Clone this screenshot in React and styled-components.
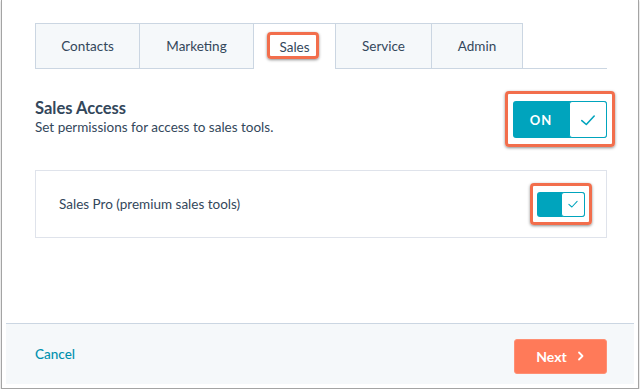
import React from 'react';
import styled, { createGlobalStyle } from 'styled-components';

const GlobalStyle = createGlobalStyle`
  html, body {
    margin: 0;
    padding: 0;
    background: #fff;
  }
  body {
    font-family: Lato, "Noto Sans", sans-serif;
    color: #33475b;
  }
`;

const Frame = styled.div`
  box-sizing: border-box;
  margin-left: 1px;
  width: 638px;
  height: 389px;
  border: 1px solid #a4a4a4;
  border-top: none;
  box-shadow: 0 1px 2px rgba(0, 0, 0, .25);
  padding: 0 4px 4px;
`;

const Modal = styled.div`
  display: flex;
  flex-direction: column;
  height: 100%;
  background: #fff;
`;

const Body = styled.div`
  flex: 1;
  padding: 23px 27px 0 29px;
`;

const TabList = styled.div`
  display: flex;
  align-items: flex-end;
  border-bottom: 1px solid #cbd6e2;
`;

const Tab = styled.div`
  position: relative;
  box-sizing: border-box;
  width: ${p => p.$width}px;
  height: ${p => (p.$active ? '46px' : '45px')};
  margin-bottom: ${p => (p.$active ? '-1px' : '0')};
  margin-left: ${p => (p.$first ? '0' : '-1px')};
  display: flex;
  align-items: center;
  justify-content: center;
  background: ${p => (p.$active ? '#fff' : '#f5f8fa')};
  border: 1px solid #cbd6e2;
  border-bottom: none;
  font-size: 13.5px;
  color: #33475b;
`;

const Highlight = styled.div`
  position: absolute;
  top: ${p => p.$top}px;
  right: ${p => p.$right}px;
  bottom: ${p => p.$bottom}px;
  left: ${p => p.$left}px;
  border: 3px solid #f26e4c;
  border-radius: 4px;
  box-shadow: 0 1px 3px rgba(0, 0, 0, .45);
  pointer-events: none;
`;

const HeaderRow = styled.div`
  margin-top: 29px;
  display: flex;
  justify-content: space-between;
  align-items: flex-start;
`;

const Title = styled.div`
  font-size: 16.5px;
  font-weight: 700;
  line-height: 20px;
  color: #33475b;
`;

const Subtitle = styled.div`
  font-size: 13.5px;
  line-height: 18px;
  color: #33475b;
`;

const ToggleWrap = styled.div`
  position: relative;
  display: flex;
  margin-top: ${p => p.$top || 0}px;
`;

const Toggle = styled.div`
  box-sizing: border-box;
  display: flex;
  width: ${p => (p.$small ? 48 : 94)}px;
  height: ${p => (p.$small ? 25 : 37)}px;
  background: #00a4bd;
  border-radius: 3px;
`;

const Track = styled.div`
  flex: 1;
  display: flex;
  align-items: center;
  justify-content: center;
  color: #fff;
  font-size: 13px;
  font-weight: 700;
  letter-spacing: 1px;
`;

const Knob = styled.div`
  box-sizing: border-box;
  width: ${p => (p.$small ? 24 : 38)}px;
  display: flex;
  align-items: center;
  justify-content: center;
  background: #fff;
  border: 1px solid #00a4bd;
  border-radius: 3px;
`;

const Card = styled.div`
  box-sizing: border-box;
  margin-top: 32px;
  height: 68px;
  border: 1px solid #dfe3eb;
  padding: 0 21px 0 23px;
  display: flex;
  align-items: center;
  justify-content: space-between;
  font-size: 13.5px;
`;

const Footer = styled.div`
  box-sizing: border-box;
  height: 61px;
  border-top: 1px solid #cbd6e2;
  background: #f5f8fa;
  padding: 0 27px 0 29px;
  display: flex;
  align-items: center;
  justify-content: space-between;
`;

const Cancel = styled.a`
  color: #0091ae;
  font-size: 13.5px;
  font-weight: 500;
  cursor: pointer;
`;

const NextButton = styled.button`
  box-sizing: border-box;
  width: 93px;
  height: 35px;
  margin-top: 4px;
  display: flex;
  align-items: center;
  justify-content: center;
  gap: 10px;
  background: #ff7a59;
  border: 1px solid #ff8f73;
  border-radius: 3px;
  color: #fff;
  font-family: Lato, "Noto Sans", sans-serif;
  font-size: 14px;
  font-weight: 700;
  cursor: pointer;
`;

const Check = ({ size }) => (
  <svg width={size} height={size} viewBox="0 0 16 16" fill="none">
    <path d="M2.5 8.5 L6.5 12 L13.5 4.5" stroke="#00a4bd" strokeWidth="1.4" strokeLinecap="round" strokeLinejoin="round" />
  </svg>
);

const Chevron = () => (
  <svg width="8" height="10" viewBox="0 0 8 10" fill="none">
    <path d="M2 1.5 L5.5 5 L2 8.5" stroke="#fff" strokeWidth="1.8" strokeLinecap="round" strokeLinejoin="round" />
  </svg>
);

const tabs = [
  { label: 'Contacts', width: 105 },
  { label: 'Marketing', width: 115 },
  { label: 'Sales', width: 83 },
  { label: 'Service', width: 97 },
  { label: 'Admin', width: 92 },
];

export default function App() {
  return (
    <>
      <GlobalStyle />
      <Frame>
        <Modal>
          <Body>
            <TabList>
              {tabs.map((t, i) => (
                <Tab key={t.label} $width={t.width} $first={i === 0} $active={t.label === 'Sales'}>
                  {t.label}
                  {t.label === 'Sales' && <Highlight $top={8} $right={16} $bottom={10} $left={13} />}
                </Tab>
              ))}
            </TabList>
            <HeaderRow>
              <div>
                <Title>Sales Access</Title>
                <Subtitle>Set permissions for access to sales tools.</Subtitle>
              </div>
              <ToggleWrap $top={3}>
                <Toggle>
                  <Track>ON</Track>
                  <Knob>
                    <Check size={18} />
                  </Knob>
                </Toggle>
                <Highlight $top={-10} $right={-8} $bottom={-9} $left={-8} />
              </ToggleWrap>
            </HeaderRow>
            <Card>
              <span>Sales Pro (premium sales tools)</span>
              <ToggleWrap>
                <Toggle $small>
                  <Track />
                  <Knob $small>
                    <Check size={12} />
                  </Knob>
                </Toggle>
                <Highlight $top={-9} $right={-7} $bottom={-8} $left={-7} />
              </ToggleWrap>
            </Card>
          </Body>
          <Footer>
            <Cancel>Cancel</Cancel>
            <NextButton>
              Next
              <Chevron />
            </NextButton>
          </Footer>
        </Modal>
      </Frame>
    </>
  );
}
